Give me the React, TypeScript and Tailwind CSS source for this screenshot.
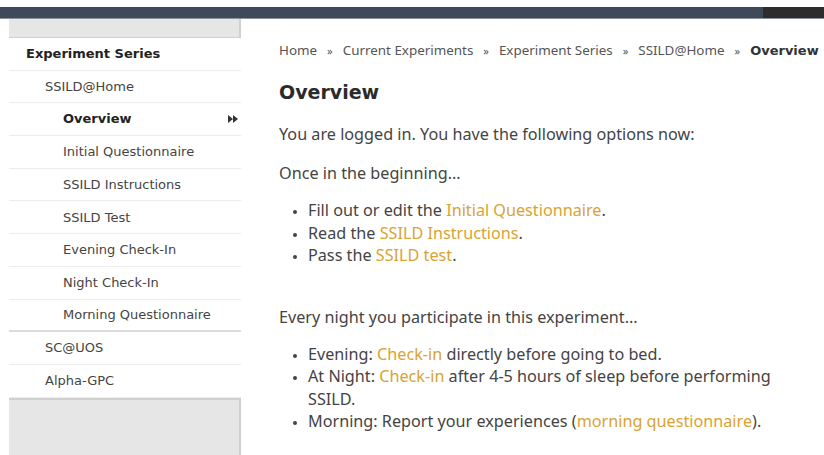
import React from "react";

type NavItem = {
  label: string;
  level: 0 | 1 | 2;
  active?: boolean;
  bold?: boolean;
  lastInGroup?: boolean;
};

const nav: NavItem[] = [
  { label: "Experiment Series", level: 0, bold: true },
  { label: "SSILD@Home", level: 1 },
  { label: "Overview", level: 2, active: true, bold: true },
  { label: "Initial Questionnaire", level: 2 },
  { label: "SSILD Instructions", level: 2 },
  { label: "SSILD Test", level: 2 },
  { label: "Evening Check-In", level: 2 },
  { label: "Night Check-In", level: 2 },
  { label: "Morning Questionnaire", level: 2, lastInGroup: true },
  { label: "SC@UOS", level: 1 },
  { label: "Alpha-GPC", level: 1 },
];

const indent = ["pl-[17px]", "pl-[36px]", "pl-[54px]"];

const crumbs = ["Home", "Current Experiments", "Experiment Series", "SSILD@Home"];

const Link = ({ children }: { children: React.ReactNode }) => (
  <a href="#" className="text-[#d9a331]">
    {children}
  </a>
);

const Sidebar = () => {
  return (
    <aside className="flex w-[232px] shrink-0 flex-col">
      <div className="h-[19px] border-r-2 border-b border-[#d0d0d0] bg-[#e6e6e6]" />
      <ul className="font-['DejaVu_Sans',sans-serif] text-[13px] text-[#444]">
        {nav.map((item) => (
          <li
            key={item.label}
            className={`flex h-[32.7px] items-center justify-between pr-[3px] ${indent[item.level]} ${
              item.lastInGroup ? "border-b-2 border-[#dcdcdc]" : "border-b border-[#ececec]"
            } ${item.bold ? "font-bold text-[#222]" : ""}`}
          >
            <span>{item.label}</span>
            {item.active && (
              <svg width="10" height="8" viewBox="0 0 10 8" className="fill-[#333]">
                <path d="M0 0 L5 4 L0 8 Z" />
                <path d="M5 0 L10 4 L5 8 Z" />
              </svg>
            )}
          </li>
        ))}
      </ul>
      {/* filler under the menu */}
      <div className="flex-1 border-t-2 border-r-2 border-[#d0d0d0] bg-[#e6e6e6]" />
    </aside>
  );
};

const Content = () => {
  return (
    <main className="flex-1 pl-[38px] pt-[21px] font-['Noto_Sans',sans-serif] text-[16.2px] text-[#444]">
      <nav className="text-[13.4px] leading-[20px] text-[#555]">
        {crumbs.map((c) => (
          <React.Fragment key={c}>
            <span>{c}</span>
            <span className="mx-[10px] text-[11px]">»</span>
          </React.Fragment>
        ))}
        <span className="font-['DejaVu_Sans',sans-serif] text-[13px] font-bold text-[#333]">Overview</span>
      </nav>
      <h1 className="mt-[18px] font-['DejaVu_Sans',sans-serif] text-[19px] leading-[26px] font-bold text-[#2b2b2b]">
        Overview
      </h1>
      <p className="mt-[18px] leading-[22px]">You are logged in. You have the following options now:</p>
      <p className="mt-[17px] leading-[22px]">Once in the beginning...</p>
      <ul className="mt-[15px] list-disc pl-[29px] leading-[22.5px] marker:text-[12px]">
        <li>
          Fill out or edit the <Link>Initial Questionnaire</Link>.
        </li>
        <li>
          Read the <Link>SSILD Instructions</Link>.
        </li>
        <li>
          Pass the <Link>SSILD test</Link>.
        </li>
      </ul>
      <p className="mt-[39px] leading-[22px]">Every night you participate in this experiment...</p>
      <ul className="mt-[15px] w-[505px] list-disc pl-[29px] leading-[22.5px] marker:text-[12px]">
        <li>
          Evening: <Link>Check-in</Link> directly before going to bed.
        </li>
        <li>
          At Night: <Link>Check-in</Link> after 4-5 hours of sleep before performing SSILD.
        </li>
        <li>
          Morning: Report your experiences (<Link>morning questionnaire</Link>).
        </li>
      </ul>
    </main>
  );
};

export default function App() {
  return (
    <div className="flex h-[455px] w-[824px] flex-col overflow-hidden bg-white">
      <div className="mt-[7px] flex h-[12px] shrink-0 border-b border-[#8a939c]">
        <div className="flex-1 bg-[#3e4a59]" />
        <div className="w-[61px] bg-[#2d2d2d]" />
      </div>
      <div className="flex flex-1 pl-[9px]">
        <Sidebar />
        <Content />
      </div>
    </div>
  );
}
